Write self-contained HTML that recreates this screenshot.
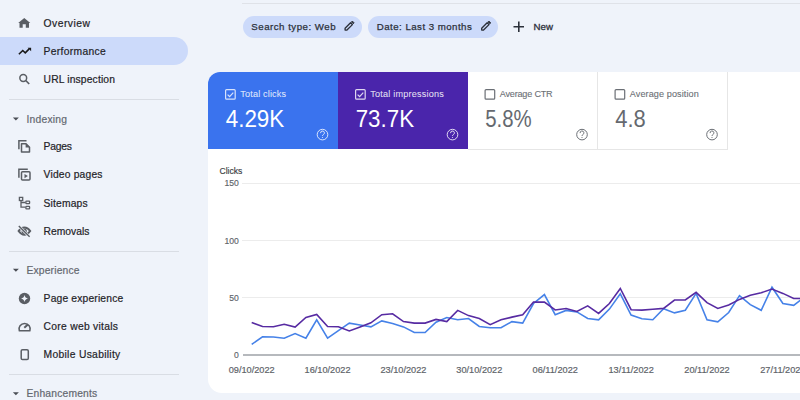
<!DOCTYPE html>
<html><head><meta charset="utf-8"><style>
html,body{margin:0;padding:0;width:800px;height:400px;overflow:hidden;background:#eff3fa;font-family:"Liberation Sans", sans-serif;}
.t{position:absolute;white-space:nowrap;line-height:1;}
</style></head><body>
<div style="position:absolute;left:0;top:37px;width:188px;height:28px;background:#ccdafa;border-radius:0 14px 14px 0"></div>
<svg style="position:absolute;left:0;top:0" width="30" height="400"><path d="M12.9 117.40 H18.9 L15.9 120.40 Z" fill="#4a4e55"/></svg>
<svg style="position:absolute;left:0;top:0" width="30" height="400"><path d="M12.9 268.80 H18.9 L15.9 271.80 Z" fill="#4a4e55"/></svg>
<svg style="position:absolute;left:0;top:0" width="30" height="400"><path d="M12.9 392.20 H18.9 L15.9 395.20 Z" fill="#4a4e55"/></svg>
<div style="position:absolute;left:9px;top:99.0px;width:170px;height:1px;background:#d9dde4"></div>
<div style="position:absolute;left:9px;top:250.7px;width:170px;height:1px;background:#d9dde4"></div>
<div style="position:absolute;left:9px;top:374.3px;width:170px;height:1px;background:#d9dde4"></div>
<svg style="position:absolute;left:0;top:0" width="200" height="400">
<path d="M24.25 18 L30.3 22.9 H29 V27.75 H25.8 V24.3 H22.7 V27.75 H19.5 V22.9 H18.2 Z" fill="#5a5e64"/>
<path d="M18.9 54.3 L22.75 50.5 L25.25 52.8 L29.2 48.9" stroke="#1a1a1a" stroke-width="1.6" fill="none"/>
<path d="M27.6 47.8 H31.1 V51.3 Z" fill="#1a1a1a"/>
<circle cx="23.25" cy="78" r="3.4" stroke="#5a5e64" fill="none" stroke-width="1.5"/>
<path d="M25.7 80.5 L29.2 84" stroke="#5a5e64" fill="none" stroke-width="1.7"/>
<path d="M18.9 149.3 V140.7 H26.5" stroke="#5a5e64" fill="none" stroke-width="1.5"/>
<path d="M21.5 143.8 H26 L29.5 147.3 V152 H21.5 Z" stroke="#5a5e64" fill="none" stroke-width="1.5" stroke-linejoin="round"/>
<path d="M25.6 143.2 L30.2 147.6 H25.6 Z" fill="#5a5e64"/>
<path d="M18.9 177.8 V169.3 H27.8" stroke="#5a5e64" fill="none" stroke-width="1.5"/>
<rect x="21.5" y="171.7" width="8.5" height="8.3" rx="1" stroke="#5a5e64" fill="none" stroke-width="1.5"/>
<path d="M24.5 174 L27.9 176.1 L24.5 178.3 Z" fill="#5a5e64"/>
<rect x="19.4" y="197.4" width="3.3" height="3.1" stroke="#5a5e64" fill="none" stroke-width="1.3"/>
<path d="M21 200.5 V207.2 H25.5 M21 202.5 H25.5" stroke="#5a5e64" fill="none" stroke-width="1.3"/>
<rect x="25.9" y="201.1" width="3.7" height="2.6" rx="0.6" stroke="#5a5e64" fill="none" stroke-width="1.3"/>
<rect x="25.9" y="206.3" width="3.7" height="2.6" rx="0.6" stroke="#5a5e64" fill="none" stroke-width="1.3"/>
<path d="M18.6 231 C20.5 228.2 22.5 227.4 24.4 227.4 C26.3 227.4 28.3 228.2 30.2 231 C28.3 233.8 26.3 234.7 24.4 234.7 C22.5 234.7 20.5 233.8 18.6 231 Z" stroke="#5a5e64" fill="none" stroke-width="2.0"/>
<circle cx="24.2" cy="231.2" r="1.9" stroke="#5a5e64" fill="none" stroke-width="1.5"/>
<path d="M18.8 226 L29.6 236.8" stroke="#eff3fa" stroke-width="2.6"/>
<path d="M18.8 226 L29.6 236.8" stroke="#5a5e64" fill="none" stroke-width="1.4"/>
<circle cx="24.5" cy="298.5" r="5.7" fill="#5a5e64"/>
<path d="M24.5 295 Q25 298 28 298.5 Q25 299 24.5 302 Q24 299 21 298.5 Q24 298 24.5 295 Z" fill="#eff3fa"/>
<path d="M19.3 330.8 A5.6 5.6 0 1 1 29.9 330.8 Z" stroke="#5a5e64" fill="none" stroke-width="1.5" stroke-linejoin="round"/>
<path d="M24.3 327.8 L27.9 324.5" stroke="#5a5e64" fill="none" stroke-width="2"/>
<rect x="21.2" y="349.7" width="7.1" height="9.9" rx="1.3" stroke="#5a5e64" fill="none" stroke-width="1.5"/>
</svg>
<div style="position:absolute;left:242px;top:3px;width:558px;height:1px;background:#dfe2e8"></div>
<div style="position:absolute;left:242.5px;top:15.5px;width:119.10000000000002px;height:22px;border-radius:11px;background:#ccdafa"></div>
<svg style="position:absolute;left:0;top:0" width="800" height="60"><path d="M345.10 30.10 L345.10 28.25 L350.56 22.79 L352.41 24.64 L346.95 30.10 Z" stroke="#2c313a" stroke-width="1.35" fill="none" stroke-linejoin="round"/><path d="M351.44 21.91 L352.32 21.03 L354.17 22.88 L353.29 23.76 Z" fill="#2c313a" stroke="#2c313a" stroke-width="0.9" stroke-linejoin="round"/></svg>
<div style="position:absolute;left:368px;top:15.5px;width:130px;height:22px;border-radius:11px;background:#ccdafa"></div>
<svg style="position:absolute;left:0;top:0" width="800" height="60"><path d="M481.70 30.10 L481.70 28.25 L487.16 22.79 L489.01 24.64 L483.55 30.10 Z" stroke="#2c313a" stroke-width="1.35" fill="none" stroke-linejoin="round"/><path d="M488.04 21.91 L488.92 21.03 L490.77 22.88 L489.89 23.76 Z" fill="#2c313a" stroke="#2c313a" stroke-width="0.9" stroke-linejoin="round"/></svg>
<svg style="position:absolute;left:0;top:0" width="800" height="60"><path d="M518.8 21.5 V32 M513.5 26.75 H524" stroke="#2c313a" stroke-width="1.6"/></svg>
<div style="position:absolute;left:208px;top:72px;width:600px;height:320.5px;background:#fff;border-radius:12px 0 0 14px"></div>
<div style="position:absolute;left:208px;top:72px;width:130px;height:77px;background:#3a73ee;border-radius:12px 0 0 0"></div>
<div style="position:absolute;left:338px;top:72px;width:129.5px;height:77px;background:#4a25ab"></div>
<div style="position:absolute;left:467.5px;top:72px;width:130px;height:77.5px;border-right:1px solid #e6e6e6;border-bottom:1px solid #e6e6e6;box-sizing:border-box"></div>
<div style="position:absolute;left:597.5px;top:72px;width:130px;height:77.5px;border-right:1px solid #e6e6e6;border-bottom:1px solid #e6e6e6;box-sizing:border-box"></div>
<svg style="position:absolute;left:0;top:0" width="800" height="160"><rect x="225.6" y="89.6" width="9.6" height="9.6" rx="1" stroke="rgba(255,255,255,0.8)" stroke-width="1.2" fill="none"/><path d="M227.6 94.6 L229.6 96.6 L233.3 92.6" stroke="rgba(255,255,255,0.8)" stroke-width="1.2" fill="none"/></svg>
<svg style="position:absolute;left:0;top:0" width="800" height="160"><circle cx="322.5" cy="134.6" r="5.3" stroke="rgba(255,255,255,0.8)" stroke-width="1.0" fill="none"/><path d="M320.6 133.1 A1.9 1.9 0 1 1 323.3 134.6 Q322.5 135.1 322.5 136.0" stroke="rgba(255,255,255,0.8)" stroke-width="1.0" fill="none"/><circle cx="322.5" cy="137.5" r="0.6" fill="rgba(255,255,255,0.8)"/></svg>
<svg style="position:absolute;left:0;top:0" width="800" height="160"><rect x="355.6" y="89.6" width="9.6" height="9.6" rx="1" stroke="rgba(255,255,255,0.82)" stroke-width="1.2" fill="none"/><path d="M357.6 94.6 L359.6 96.6 L363.3 92.6" stroke="rgba(255,255,255,0.82)" stroke-width="1.2" fill="none"/></svg>
<svg style="position:absolute;left:0;top:0" width="800" height="160"><circle cx="452.5" cy="134.6" r="5.3" stroke="rgba(255,255,255,0.82)" stroke-width="1.0" fill="none"/><path d="M450.6 133.1 A1.9 1.9 0 1 1 453.3 134.6 Q452.5 135.1 452.5 136.0" stroke="rgba(255,255,255,0.82)" stroke-width="1.0" fill="none"/><circle cx="452.5" cy="137.5" r="0.6" fill="rgba(255,255,255,0.82)"/></svg>
<svg style="position:absolute;left:0;top:0" width="800" height="160"><rect x="485.1" y="89.6" width="9.6" height="9.6" rx="1" stroke="#6b6f75" stroke-width="1.2" fill="none"/></svg>
<svg style="position:absolute;left:0;top:0" width="800" height="160"><circle cx="582.0" cy="134.6" r="5.3" stroke="#6b6f75" stroke-width="1.0" fill="none"/><path d="M580.1 133.1 A1.9 1.9 0 1 1 582.8 134.6 Q582.0 135.1 582.0 136.0" stroke="#6b6f75" stroke-width="1.0" fill="none"/><circle cx="582.0" cy="137.5" r="0.6" fill="#6b6f75"/></svg>
<svg style="position:absolute;left:0;top:0" width="800" height="160"><rect x="615.1" y="89.6" width="9.6" height="9.6" rx="1" stroke="#6b6f75" stroke-width="1.2" fill="none"/></svg>
<svg style="position:absolute;left:0;top:0" width="800" height="160"><circle cx="712.0" cy="134.6" r="5.3" stroke="#6b6f75" stroke-width="1.0" fill="none"/><path d="M710.1 133.1 A1.9 1.9 0 1 1 712.8 134.6 Q712.0 135.1 712.0 136.0" stroke="#6b6f75" stroke-width="1.0" fill="none"/><circle cx="712.0" cy="137.5" r="0.6" fill="#6b6f75"/></svg>
<div style="position:absolute;left:242px;top:182.50px;width:558px;height:1px;background:#ececec"></div>
<div style="position:absolute;left:242px;top:239.80px;width:558px;height:1px;background:#ececec"></div>
<div style="position:absolute;left:242px;top:297.20px;width:558px;height:1px;background:#ececec"></div>
<div style="position:absolute;left:243px;top:354.25px;width:557px;height:1.6px;background:#b6b9bd"></div>
<svg style="position:absolute;left:0;top:0" width="800" height="400"><polyline points="251.7,344.4 262.5,336.8 273.4,337.0 284.2,338.2 295.1,333.5 305.9,338.2 316.7,319.8 327.6,338.2 338.4,330.7 349.3,323.1 360.1,325.0 370.9,326.9 381.8,320.9 392.6,323.5 403.5,326.9 414.3,332.5 425.1,332.5 436.0,322.2 446.8,317.5 457.7,319.8 468.5,318.5 479.3,326.5 490.2,327.8 501.0,327.8 511.9,321.6 522.7,323.1 533.5,303.5 544.4,294.6 555.2,314.7 566.1,310.4 576.9,311.9 587.7,318.5 598.6,319.8 609.4,309.1 620.3,293.8 631.1,315.0 641.9,318.7 652.8,319.7 663.6,308.8 674.5,312.9 685.3,310.3 696.1,293.4 707.0,319.7 717.8,321.9 728.7,312.5 739.5,295.6 750.3,304.6 761.2,310.3 772.0,287.2 782.9,303.5 793.7,305.4 804.5,297.0" fill="none" stroke="#4682e8" stroke-width="1.6" stroke-linejoin="miter"/><polyline points="251.7,322.6 262.5,326.5 273.4,326.7 284.2,324.3 295.1,327.1 305.9,317.5 316.7,314.5 327.6,326.5 338.4,326.7 349.3,331.0 360.1,326.9 370.9,322.8 381.8,314.7 392.6,313.8 403.5,321.6 414.3,323.1 425.1,323.1 436.0,319.4 446.8,321.6 457.7,310.4 468.5,315.6 479.3,318.5 490.2,324.7 501.0,319.8 511.9,317.1 522.7,314.7 533.5,302.1 544.4,302.1 555.2,310.0 566.1,308.5 576.9,311.5 587.7,305.9 598.6,313.4 609.4,303.5 620.3,288.5 631.1,309.7 641.9,310.1 652.8,309.3 663.6,308.4 674.5,300.0 685.3,300.0 696.1,292.3 707.0,302.6 717.8,308.4 728.7,305.0 739.5,299.4 750.3,295.3 761.2,292.8 772.0,289.1 782.9,293.4 793.7,298.5 804.5,298.5" fill="none" stroke="#572ba2" stroke-width="1.6" stroke-linejoin="miter"/></svg>
<svg style="position:absolute;left:0;top:0" width="800" height="400" font-family="Liberation Sans"><text x="43.60" y="27" font-size="10.3" fill="#1f2328" font-weight="normal" letter-spacing="0.478" stroke="#1f2328" stroke-width="0.2">Overview</text><text x="43.60" y="55" font-size="10.3" fill="#1f2328" font-weight="normal" letter-spacing="0.323" stroke="#1f2328" stroke-width="0.2">Performance</text><text x="43.60" y="83" font-size="10.3" fill="#1f2328" font-weight="normal" letter-spacing="0.148" stroke="#1f2328" stroke-width="0.2">URL inspection</text><text x="43.60" y="150" font-size="10.3" fill="#1f2328" font-weight="normal" letter-spacing="-0.200" stroke="#1f2328" stroke-width="0.2">Pages</text><text x="43.60" y="178" font-size="10.3" fill="#1f2328" font-weight="normal" letter-spacing="0.184" stroke="#1f2328" stroke-width="0.2">Video pages</text><text x="43.60" y="207" font-size="10.3" fill="#1f2328" font-weight="normal" letter-spacing="0.150" stroke="#1f2328" stroke-width="0.2">Sitemaps</text><text x="43.60" y="235" font-size="10.3" fill="#1f2328" font-weight="normal" letter-spacing="0.002" stroke="#1f2328" stroke-width="0.2">Removals</text><text x="43.60" y="302" font-size="10.3" fill="#1f2328" font-weight="normal" letter-spacing="0.164" stroke="#1f2328" stroke-width="0.2">Page experience</text><text x="43.60" y="330" font-size="10.3" fill="#1f2328" font-weight="normal" letter-spacing="0.286" stroke="#1f2328" stroke-width="0.2">Core web vitals</text><text x="43.60" y="358" font-size="10.3" fill="#1f2328" font-weight="normal" letter-spacing="0.303" stroke="#1f2328" stroke-width="0.2">Mobile Usability</text><text x="26.50" y="123" font-size="10.3" fill="#646870" font-weight="normal" letter-spacing="0.209" stroke="#646870" stroke-width="0.2">Indexing</text><text x="26.50" y="274" font-size="10.3" fill="#646870" font-weight="normal" letter-spacing="0.161" stroke="#646870" stroke-width="0.2">Experience</text><text x="26.50" y="397" font-size="10.3" fill="#646870" font-weight="normal" letter-spacing="0.182" stroke="#646870" stroke-width="0.2">Enhancements</text><text x="251.30" y="30" font-size="9.7" fill="#2c313a" font-weight="normal" letter-spacing="0.499" stroke="#2c313a" stroke-width="0.25">Search type: Web</text><text x="376.80" y="30" font-size="9.7" fill="#2c313a" font-weight="normal" letter-spacing="0.460" stroke="#2c313a" stroke-width="0.25">Date: Last 3 months</text><text x="533.50" y="30" font-size="9.7" fill="#2c313a" font-weight="normal" letter-spacing="0.026" stroke="#2c313a" stroke-width="0.3">New</text><text x="240.30" y="97" font-size="9.1" fill="rgba(255,255,255,0.8)" font-weight="normal" letter-spacing="0.164" stroke="rgba(255,255,255,0.8)" stroke-width="0.1">Total clicks</text><text x="225.70" y="127" font-size="23.3" fill="#ffffff" font-weight="normal" textLength="58.60" lengthAdjust="spacingAndGlyphs">4.29K</text><text x="370.30" y="97" font-size="9.1" fill="rgba(255,255,255,0.82)" font-weight="normal" letter-spacing="0.200" stroke="rgba(255,255,255,0.82)" stroke-width="0.1">Total impressions</text><text x="355.70" y="127" font-size="23.3" fill="#ffffff" font-weight="normal" textLength="58.40" lengthAdjust="spacingAndGlyphs">73.7K</text><text x="499.80" y="97" font-size="9.1" fill="#6b6f75" font-weight="normal" letter-spacing="-0.206" stroke="#6b6f75" stroke-width="0.1">Average CTR</text><text x="485.20" y="127" font-size="23.3" fill="#65696f" font-weight="normal" textLength="46.50" lengthAdjust="spacingAndGlyphs">5.8%</text><text x="629.80" y="97" font-size="9.1" fill="#6b6f75" font-weight="normal" letter-spacing="0.092" stroke="#6b6f75" stroke-width="0.1">Average position</text><text x="615.20" y="127" font-size="23.3" fill="#65696f" font-weight="normal" textLength="30.50" lengthAdjust="spacingAndGlyphs">4.8</text><text x="219.50" y="174" font-size="8.6" fill="#3c4043" font-weight="normal" stroke="#3c4043" stroke-width="0.15">Clicks</text><text x="238.79" y="186" font-size="8.6" fill="#60646a" font-weight="normal" text-anchor="end" stroke="#60646a" stroke-width="0.15">150</text><text x="238.79" y="244" font-size="8.6" fill="#60646a" font-weight="normal" text-anchor="end" stroke="#60646a" stroke-width="0.15">100</text><text x="238.82" y="301" font-size="8.6" fill="#60646a" font-weight="normal" text-anchor="end" stroke="#60646a" stroke-width="0.15">50</text><text x="238.81" y="358" font-size="8.6" fill="#60646a" font-weight="normal" text-anchor="end" stroke="#60646a" stroke-width="0.15">0</text><text x="251.70" y="373" font-size="9.2" fill="#60646a" font-weight="normal" text-anchor="middle" stroke="#60646a" stroke-width="0.2">09/10/2022</text><text x="327.58" y="373" font-size="9.2" fill="#60646a" font-weight="normal" text-anchor="middle" stroke="#60646a" stroke-width="0.2">16/10/2022</text><text x="403.46" y="373" font-size="9.2" fill="#60646a" font-weight="normal" text-anchor="middle" stroke="#60646a" stroke-width="0.2">23/10/2022</text><text x="479.34" y="373" font-size="9.2" fill="#60646a" font-weight="normal" text-anchor="middle" stroke="#60646a" stroke-width="0.2">30/10/2022</text><text x="555.22" y="373" font-size="9.2" fill="#60646a" font-weight="normal" text-anchor="middle" stroke="#60646a" stroke-width="0.2">06/11/2022</text><text x="631.10" y="373" font-size="9.2" fill="#60646a" font-weight="normal" text-anchor="middle" stroke="#60646a" stroke-width="0.2">13/11/2022</text><text x="706.98" y="373" font-size="9.2" fill="#60646a" font-weight="normal" text-anchor="middle" stroke="#60646a" stroke-width="0.2">20/11/2022</text><text x="782.86" y="373" font-size="9.2" fill="#60646a" font-weight="normal" text-anchor="middle" stroke="#60646a" stroke-width="0.2">27/11/2022</text></svg>
</body></html>
